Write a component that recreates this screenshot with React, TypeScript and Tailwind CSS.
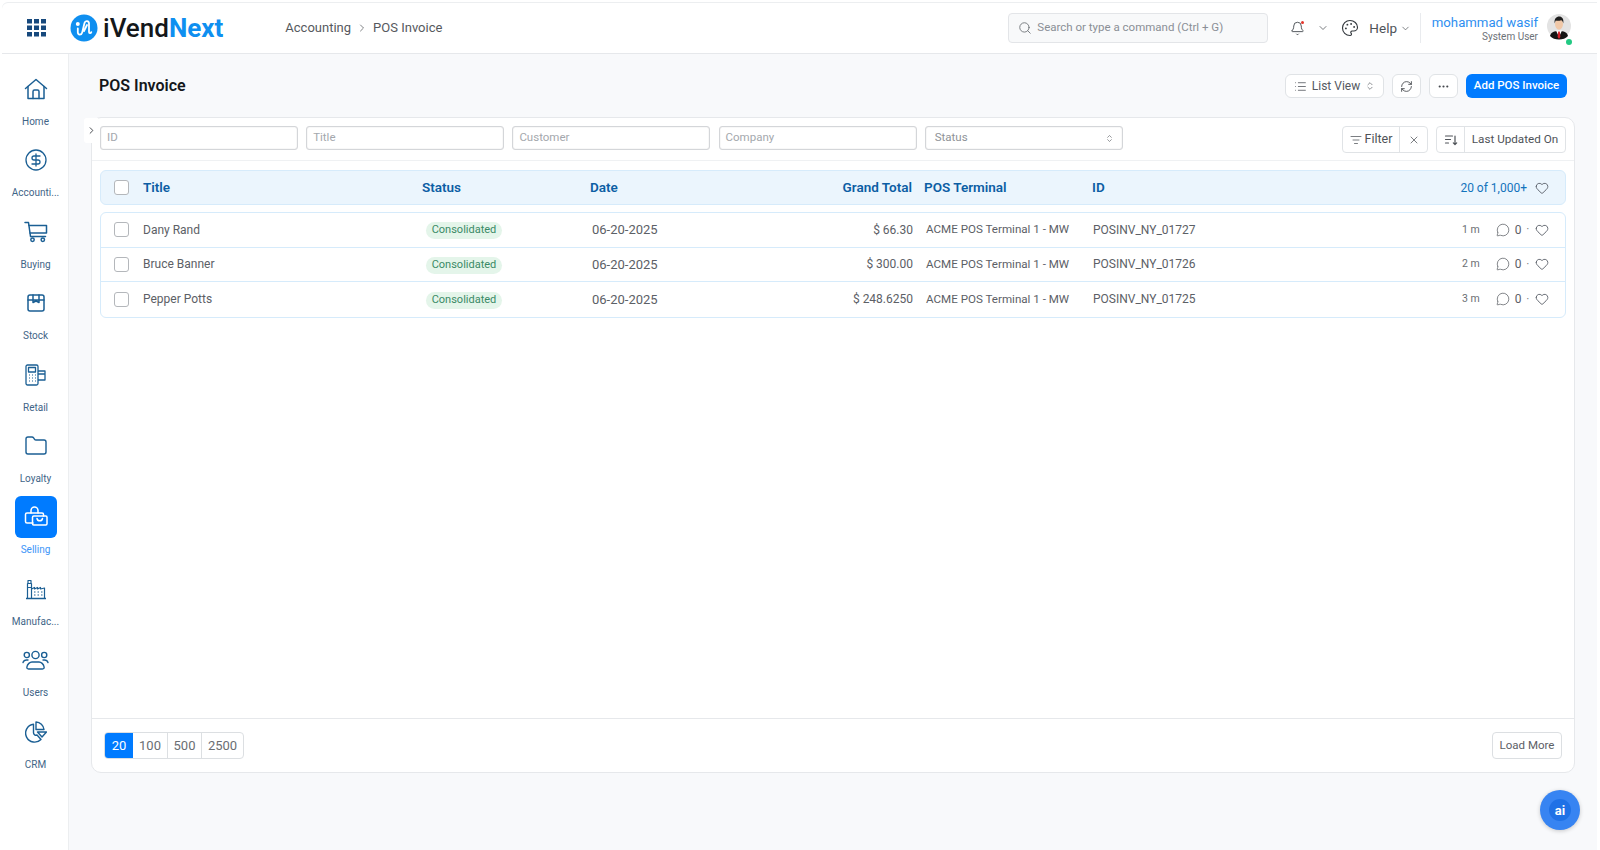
import React from "react";
import { ChevronRight, ChevronDown, ChevronsUpDown, Search, Bell, Palette, List, RefreshCw, Ellipsis, ListFilter, X, MessageCircle, Heart, CircleDollarSign, Folder } from "lucide-react";

const stroke = "#1b5f94";

function HomeIcon() {
  return (
    <svg width="24" height="22" viewBox="0 0 24 22" fill="none" stroke={stroke} strokeWidth="1.5" strokeLinejoin="round" strokeLinecap="round">
      <path d="M1.5 10.5 12 1.500l10.500 9" />
      <path d="M4 8.500V20.500h16V8.500" />
      <path d="M9 20.500V13.500a1.500 1.500 0 0 1 1.500-1.500h3a1.500 1.500 0 0 1 1.500 1.500v7" />
    </svg>
  );
}
function CartIcon() {
  return (
    <svg width="24" height="22" viewBox="0 0 24 22" fill="none" stroke={stroke} strokeWidth="1.5" strokeLinejoin="round" strokeLinecap="round">
      <path d="M1 1.500h3.500l2 14h15" />
      <path d="M5 4.500h17.500v7.500H6" />
      <circle cx="8.500" cy="18.800" r="1.700" />
      <circle cx="18.800" cy="18.800" r="1.700" />
    </svg>
  );
}
function StockIcon() {
  return (
    <svg width="22" height="22" viewBox="0 0 22 22" fill="none" stroke={stroke} strokeWidth="1.5" strokeLinejoin="round" strokeLinecap="round">
      <path d="M5 3h12a2 2 0 0 1 2 2v12a2 2 0 0 1-2 2H5a2 2 0 0 1-2-2V5a2 2 0 0 1 2-2Z" />
      <path d="M3 8h16M8 3v7.500l3-1.500 3 1.500V3" />
    </svg>
  );
}
function RetailIcon() {
  return (
    <svg width="22" height="22" viewBox="0 0 22 22" fill="none" stroke={stroke} strokeWidth="1.3" strokeLinejoin="round">
      <rect x="1" y="1" width="12" height="20" rx="1.500" />
      <rect x="3.500" y="3.500" width="7" height="4.500" />
      <path d="M13 7h7v9h-7M13 10h7" />
      <path d="M4 11h1M7 11h1M10 11h1M4 14h1M7 14h1M10 14h1M4 17h1M7 17h1M10 17h1" strokeWidth="1.2" />
    </svg>
  );
}
function SellingIcon() {
  return (
    <svg width="24" height="22" viewBox="0 0 24 22" fill="none" stroke="#fff" strokeWidth="1.5" strokeLinejoin="round" strokeLinecap="round">
      <path d="M7 7V4.500a3.500 3.500 0 0 1 7 0V7" />
      <path d="M9 17H3a1.500 1.500 0 0 1-1.500-1.500V8.500A1.500 1.500 0 0 1 3 7h15a1.500 1.500 0 0 1 1.500 1.500V10" />
      <rect x="8.500" y="10" width="14.500" height="9" rx="1.200" />
      <path d="M13 12.500a2.800 2.800 0 0 0 5.500 0" />
    </svg>
  );
}
function FactoryIcon() {
  return (
    <svg width="22" height="22" viewBox="0 0 22 22" fill="none" stroke={stroke} strokeWidth="1.2" strokeLinejoin="round">
      <path d="M1 20.500h20" strokeWidth="1.500" />
      <path d="M2.500 20V5.500h4V20M3 2.500h3v3H3zM2.500 9.500h4" />
      <path d="M6.500 11l3-1.500V11l3-1.500V11l3-1.500V11l4-1v10" />
      <path d="M9 14h1.500M12.500 14H14M16 14h1.500M9 17h1.500M12.500 17H14M16 17h1.500" />
    </svg>
  );
}
function UsersIcon() {
  return (
    <svg width="27" height="20" viewBox="0 0 27 20" fill="none" stroke={stroke} strokeWidth="1.4" strokeLinecap="round">
      <circle cx="13.500" cy="5" r="3.600" />
      <circle cx="4.800" cy="5" r="2.600" />
      <circle cx="22.200" cy="5" r="2.600" />
      <path d="M6.500 19c-1.300 0-1.800-.8-1.600-2 .5-3 3-5 5.100-5h7c2.100 0 4.600 2 5.100 5 .2 1.200-.3 2-1.600 2Z" />
      <path d="M1 12.500c.5-1.500 2-2.500 3.500-2.500h1.500M26 12.500c-.5-1.500-2-2.500-3.500-2.500H21" />
    </svg>
  );
}
function CrmIcon() {
  return (
    <svg width="22" height="22" viewBox="0 0 22 22" fill="none" stroke={stroke} strokeWidth="1.4" strokeLinejoin="round">
      <path d="M8.500 3.200A9 9 0 1 0 16 18.500l-4-4.500a2.500 2.500 0 0 1-3.500-2.200Z" />
      <path d="M11 1a8.500 8.500 0 0 1 8 7.500h-8Z" />
      <path d="M12.500 11h9l-4.500 5Z" />
    </svg>
  );
}
function SortIcon() {
  return (
    <svg width="14" height="14" viewBox="0 0 14 14" fill="none" stroke="#4f5358" strokeWidth="1.2" strokeLinecap="round" strokeLinejoin="round">
      <path d="M1.500 3h7M1.500 6.500h5M1.500 10h3M11 3v8.500M9.300 9.800l1.700 1.700 1.700-1.700" />
    </svg>
  );
}
function LogoMark() {
  return (
    <svg width="28" height="28" viewBox="0 0 28 28">
      <circle cx="14" cy="14" r="13.500" fill="#0f8ff0" />
      <circle cx="7.800" cy="10" r="2" fill="#fff" />
      <path d="M7.800 14.500v3.800c0 3 3.700 3 4.400.2l2.300-9.500c.7-2.700 4.500-2.400 4.500.6v8.400c0 1.400 1.700 1.700 2.300.2M14 17l3-6" fill="none" stroke="#fff" strokeWidth="1.800" strokeLinecap="round" />
    </svg>
  );
}
function Avatar() {
  return (
    <svg width="24" height="28" viewBox="0 0 24 28">
      <circle cx="12" cy="12" r="12" fill="#e3e3e3" />
      <path d="M3 22c.8-4 4.500-5 9-5s8.200 1 9 5c-2 2.500-5.500 3.500-9 3.500S5 24.500 3 22Z" fill="#141414" />
      <path d="M9 16.500h6L12 23Z" fill="#fff" />
      <path d="M11.200 17.500h1.600l.6 5.500-1.400 2-1.400-2Z" fill="#d3222a" />
      <ellipse cx="12" cy="10" rx="4" ry="5.800" fill="#f0c8a8" />
      <path d="M7.700 9.500c-.8-5 1.800-7 4.500-7s4.800 2 4.100 7c-.4-1.800-1.200-3-2.200-3.200-2 .7-4.300.5-5.300.3-.4.700-.8 1.800-1.100 2.900Z" fill="#1e1e1e" />
    </svg>
  );
}

function NavItem({ icon, label, active }: { icon: React.ReactNode; label: string; active?: boolean }) {
  return (
    <div className="flex flex-col items-center h-[71.4px]">
      <div className={`w-[42px] h-[42px] rounded-[6px] flex items-center justify-center shrink-0 ${active ? "bg-[#007bff]" : ""}`}>{icon}</div>
      <div className={`mt-[4px] text-[10px] leading-[16px] w-[56px] text-center whitespace-nowrap ${active ? "text-[#3d95f8]" : "text-[#3f6587]"}`}>{label}</div>
    </div>
  );
}

function FilterInput({ label }: { label: string }) {
  return (
    <div className="w-[198px] h-[24px] bg-white border border-[#d4d6d9] rounded-[3px] shadow-[inset_0_0_1px_#bbb] pl-[6px] flex items-center text-[11.5px] text-[#a4a8ad]">{label}</div>
  );
}

function Checkbox() {
  return <div className="w-[15px] h-[15px] bg-white border border-[#b4b7bb] rounded-[3px] shrink-0" />;
}

const rows = [
  { title: "Dany Rand", total: "$ 66.30", id: "POSINV_NY_01727", ago: "1 m" },
  { title: "Bruce Banner", total: "$ 300.00", id: "POSINV_NY_01726", ago: "2 m" },
  { title: "Pepper Potts", total: "$ 248.6250", id: "POSINV_NY_01725", ago: "3 m" },
];

export default function App() {
  return (
    <div className="w-full h-[850px] overflow-hidden bg-white flex flex-col pt-[3px] text-[#4b5563]" style={{ fontFamily: "Roboto, sans-serif" }}>
      <header className="h-[51px] shrink-0 flex items-center border-b border-[#e6e8eb] bg-white ml-[2px] mr-[3px] rounded-tl-[6px] shadow-[0_-1px_0_#eceef0]">
        <div className="w-[68px] flex justify-center pl-[2px]">
          <svg width="20" height="18" viewBox="0 0 20 18" fill="#17497d">
            {[0, 7, 14].map((x) => [0, 6.5, 13].map((y) => <rect key={`${x}-${y}`} x={x} y={y} width="5" height="4.5" />))}
          </svg>
        </div>
        <LogoMark />
        <div className="ml-[5px] text-[26px] leading-none font-medium text-[#14171a]">
          iVend<span className="font-bold text-[#0f8ff0]">Next</span>
        </div>
        <div className="ml-[62px] flex items-center text-[13px] text-[#56595e]">
          <span>Accounting</span>
          <ChevronRight size={12} className="mx-[5px]" strokeWidth={1.5} />
          <span>POS Invoice</span>
        </div>
        <div className="ml-auto flex items-center">
          <div className="w-[260px] h-[30px] rounded-[4px] bg-[#f8f9fa] border border-[#e3e5e8] flex items-center pl-[9px] text-[11.5px] text-[#8a8f96]">
            <Search size={14} className="mr-[5px] text-[#6b7075]" strokeWidth={1.5} />
            Search or type a command (Ctrl + G)
          </div>
          <div className="relative ml-[22px]">
            <Bell size={15} strokeWidth={1.4} className="text-[#3d4248]" />
            <span className="absolute top-[0px] right-[1px] w-[3px] h-[3px] rounded-full bg-[#e5342b]" />
          </div>
          <ChevronDown size={12} className="ml-[12px] text-[#55595e]" strokeWidth={1.6} />
          <Palette size={18} strokeWidth={1.5} className="ml-[12px] text-[#33383d]" />
          <span className="ml-[10px] text-[13.5px] text-[#4f5459]">Help</span>
          <ChevronDown size={11} className="ml-[3px] text-[#55595e]" strokeWidth={1.6} />
          <div className="ml-[9px] h-[30px] w-px bg-[#e9ebee]" />
          <div className="w-[117px] flex flex-col items-end">
            <span className="text-[13.2px] leading-[17px] text-[#2e8ff0]">mohammad wasif</span>
            <span className="text-[10px] leading-[12px] text-[#6c7177]">System User</span>
          </div>
          <div className="relative ml-[9px] mr-[26px] w-[24px] h-[28px]">
            <Avatar />
            <span className="absolute right-[-1px] bottom-[-3px] w-[6px] h-[6px] rounded-full bg-[#22c983]" />
          </div>
        </div>
      </header>
      <div className="flex-1 flex min-h-0">
        <aside className="w-[69px] shrink-0 bg-white border-r border-[#eceef0] flex flex-col items-center pt-[14px] pl-[3px]">
          <NavItem icon={<HomeIcon />} label="Home" />
          <NavItem icon={<CircleDollarSign size={24} color={stroke} strokeWidth={1.3} />} label="Accounti..." />
          <NavItem icon={<CartIcon />} label="Buying" />
          <NavItem icon={<StockIcon />} label="Stock" />
          <NavItem icon={<RetailIcon />} label="Retail" />
          <NavItem icon={<Folder size={24} color={stroke} strokeWidth={1.4} />} label="Loyalty" />
          <NavItem icon={<SellingIcon />} label="Selling" active />
          <NavItem icon={<FactoryIcon />} label="Manufac..." />
          <NavItem icon={<UsersIcon />} label="Users" />
          <NavItem icon={<CrmIcon />} label="CRM" />
        </aside>
        <main className="flex-1 bg-[#f8f9fb] mr-[3px] pl-[22px] pr-[22px] relative">
          <div className="h-[63px] flex items-center justify-between pt-[1px]">
            <h1 className="ml-[8px] text-[16px] font-semibold text-[#14171a]">POS Invoice</h1>
            <div className="flex items-center gap-[8px] pr-[8px]">
              <div className="w-[99px] h-[24px] bg-white border border-[#e0e3e6] rounded-[6px] flex items-center justify-center text-[12px] text-[#55595f]">
                <List size={13} strokeWidth={1.5} className="mr-[5px]" />
                List View
                <ChevronsUpDown size={10} strokeWidth={1.6} className="ml-[5px]" />
              </div>
              <div className="w-[29px] h-[24px] bg-white border border-[#e0e3e6] rounded-[6px] flex items-center justify-center text-[#44484d]">
                <RefreshCw size={13} strokeWidth={1.6} />
              </div>
              <div className="w-[29px] h-[24px] bg-white border border-[#e0e3e6] rounded-[6px] flex items-center justify-center text-[#44484d]">
                <Ellipsis size={13} strokeWidth={2} />
              </div>
              <div className="w-[101px] h-[24px] bg-[#007bff] rounded-[6px] flex items-center justify-center text-[11.5px] font-medium text-white">Add POS Invoice</div>
            </div>
          </div>
          <section className="h-[656px] bg-white border border-[#e6e8eb] rounded-[10px] flex flex-col relative">
            <div className="absolute left-[-8px] top-[0px] w-[14px] h-[25px] bg-white rounded-l-[3px] flex items-center justify-center text-[#3c4045]">
              <ChevronRight size={11} strokeWidth={2} />
            </div>
            <div className="h-[43px] shrink-0 border-b border-[#eff1f3] flex items-start pt-[8px] pl-[8px] pr-[8px]">
              <div className="flex gap-[8.2px]">
                <FilterInput label="ID" />
                <FilterInput label="Title" />
                <FilterInput label="Customer" />
                <FilterInput label="Company" />
                <div className="w-[198px] h-[24px] bg-white border border-[#d4d6d9] rounded-[3px] shadow-[inset_0_0_1px_#bbb] pl-[9px] pr-[8px] flex items-center justify-between text-[11.5px] text-[#8e9297]">
                  Status
                  <ChevronsUpDown size={9} strokeWidth={1.6} className="text-[#55595e]" />
                </div>
              </div>
              <div className="ml-auto flex items-center gap-[8px]">
                <div className="flex h-[27px] bg-white border border-[#e0e3e6] rounded-[4px] text-[12.5px] text-[#4f5358]">
                  <div className="w-[57px] border-r border-[#e0e3e6] flex items-center justify-center">
                    <ListFilter size={12} strokeWidth={1.5} className="mr-[3px]" />
                    Filter
                  </div>
                  <div className="w-[27px] flex items-center justify-center"><X size={12} strokeWidth={1.5} /></div>
                </div>
                <div className="flex h-[27px] bg-white border border-[#e0e3e6] rounded-[4px] text-[11.7px] text-[#4f5358]">
                  <div className="w-[28px] border-r border-[#e0e3e6] flex items-center justify-center"><SortIcon /></div>
                  <div className="w-[100px] flex items-center justify-center whitespace-nowrap">Last Updated On</div>
                </div>
              </div>
            </div>
            <div className="mx-[8px] mt-[9px] h-[35px] bg-[#ebf5fd] border border-[#d6ebfb] rounded-[6px] flex items-center text-[13.5px] font-semibold text-[#0c5ea4] shrink-0">
              <div className="ml-[13px] w-[29px]"><Checkbox /></div>
              <div className="w-[279px]">Title</div>
              <div className="w-[168px]">Status</div>
              <div className="w-[200px]">Date</div>
              <div className="w-[122px] text-right">Grand Total</div>
              <div className="w-[180px] pl-[12px]">POS Terminal</div>
              <div className="flex-1">ID</div>
              <div className="font-normal text-[12px] text-[#1373bc]">20 of 1,000+</div>
              <Heart size={14} strokeWidth={1.4} className="ml-[8px] mr-[16px] text-[#49505a]" />
            </div>
            <div className="mx-[8px] mt-[7px] border border-[#d6ebfb] rounded-[6px] shrink-0">
              {rows.map((r, i) => (
                <div key={r.id} className={`h-[34.5px] flex items-center text-[12px] text-[#5c6066] ${i < 2 ? "border-b border-[#d6ebfb]" : ""}`}>
                  <div className="ml-[13px] w-[29px]"><Checkbox /></div>
                  <div className="w-[283px]">{r.title}</div>
                  <div className="w-[166px]">
                    <span className="inline-flex h-[17px] w-[76px] items-center justify-center rounded-full bg-[#e4f5ea] text-[11px] text-[#3a8a66]">Consolidated</span>
                  </div>
                  <div className="w-[203px] text-[13px]">06-20-2025</div>
                  <div className="w-[118px] text-right">{r.total}</div>
                  <div className="w-[180px] pl-[13px] text-[11.6px] whitespace-nowrap">ACME POS Terminal 1 - MW</div>
                  <div className="flex-1">{r.id}</div>
                  <div className="text-[10.5px] text-[#6a6e73] mr-[16px]">{r.ago}</div>
                  <MessageCircle size={14} strokeWidth={1.3} />
                  <span className="ml-[5px] text-[12px]">0</span>
                  <span className="ml-[5px] mr-[6px] text-[10px]">·</span>
                  <Heart size={14} strokeWidth={1.4} className="mr-[16px] text-[#49505a]" />
                </div>
              ))}
            </div>
            <div className="mt-auto h-[54px] border-t border-[#e6e8eb] flex items-center pl-[12px] pr-[12px] shrink-0">
              <div className="flex h-[27px] border border-[#dcdfe2] rounded-[4px] text-[13px] text-[#6a6e73] overflow-hidden">
                <div className="w-[28px] bg-[#007bff] text-white flex items-center justify-center">20</div>
                <div className="w-[35px] border-r border-[#dcdfe2] flex items-center justify-center">100</div>
                <div className="w-[34px] border-r border-[#dcdfe2] flex items-center justify-center">500</div>
                <div className="w-[41px] flex items-center justify-center">2500</div>
              </div>
              <div className="ml-auto h-[27px] w-[70px] border border-[#dcdfe2] rounded-[4px] text-[11.5px] text-[#5c6066] flex items-center justify-center">Load More</div>
            </div>
          </section>
          <div className="absolute right-[17px] bottom-[20px] w-[40px] h-[40px] rounded-full bg-[#3784f2] shadow-[0_1px_4px_rgba(0,0,0,0.2)] flex items-center justify-center">
            <div className="w-[22px] h-[22px] rounded-full bg-[#1f71e6] flex items-center justify-center text-[13px] font-bold text-white leading-none">ai</div>
          </div>
        </main>
      </div>
    </div>
  );
}
